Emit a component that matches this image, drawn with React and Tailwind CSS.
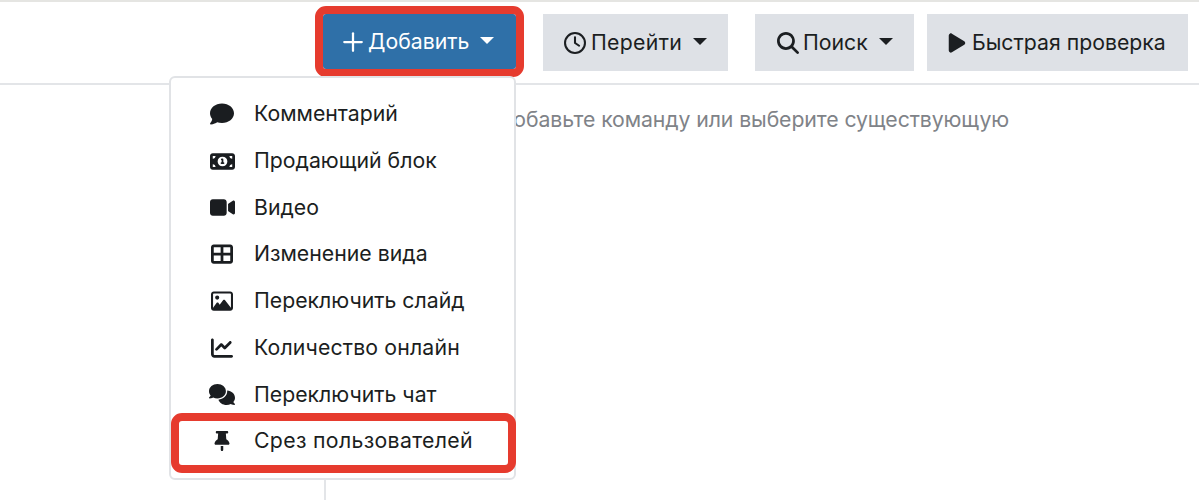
import React from "react";
import { FaComment, FaMoneyBill1, FaVideo, FaTableCellsLarge, FaRegImage, FaChartLine, FaComments, FaThumbtack, FaPlay, FaMagnifyingGlass, FaRegClock } from "react-icons/fa6";
import { Plus } from "lucide-react";

const Caret = ({ color }) => (
  <span className={`ml-[11px] mb-[3px] w-0 h-0 border-x-[7px] border-x-transparent border-t-[7px] ${color}`} />
);

const items = [
  [FaComment, "Комментарий", 24, "tracking-normal"],
  [FaMoneyBill1, "Продающий блок", 25, "tracking-normal"],
  [FaVideo, "Видео", 25, "tracking-normal"],
  [FaTableCellsLarge, "Изменение вида", 22, "tracking-normal"],
  [FaRegImage, "Переключить слайд", 22, "tracking-normal"],
  [FaChartLine, "Количество онлайн", 22, "tracking-[0.15px]"],
  [FaComments, "Переключить чат", 29, "tracking-normal"],
  [FaThumbtack, "Срез пользователей", 20, "tracking-[0.33px]"],
];

export default function App() {
  return (
    <div className="relative h-[500px] w-[1199px] overflow-hidden bg-white text-[21.25px] text-[#1b1e21] [font-family:Inter,'Liberation_Sans',sans-serif]">
      <div className="h-[85px] border-t-2 border-b-2 border-t-[#e5e5e2] border-b-[#e3e5e8] flex items-start pt-[12px] pl-[323px]">
        <div className="rounded-[3px] outline-[8px] outline-[#e63b2e] h-[55px] w-[193px] bg-[#2f70a8] text-white flex items-center pl-[15px]">
          <Plus size={30} strokeWidth={1.8} />
          <span>Добавить</span>
          <Caret color="border-t-white" />
        </div>
        <div className="ml-[27px] h-[57px] w-[185px] bg-[#dee1e6] flex items-center pl-[21px]">
          <FaRegClock size={22} className="mr-[5px]" />
          <span className="tracking-[0.3px]">Перейти</span>
          <Caret color="border-t-[#1b1e21]" />
        </div>
        <div className="ml-[27px] h-[57px] w-[159px] bg-[#dee1e6] flex items-center pl-[22px]">
          <FaMagnifyingGlass size={22} className="mr-[4px]" />
          <span>Поиск</span>
          <Caret color="border-t-[#1b1e21]" />
        </div>
        <div className="ml-[13px] h-[57px] w-[261px] bg-[#dee1e6] flex items-center pl-[19px]">
          <FaPlay size={22} className="mr-[4px]" />
          <span>Быстрая проверка</span>
        </div>
      </div>
      <div className="ml-[324px] h-[415px] border-l-2 border-[#e3e5e8] pl-[170px] pt-[18px] leading-[32px] text-[#7f8388]">
        <span className="tracking-[-0.1px]">Добавьте команду или выберите существующую</span>
      </div>

      <div className="absolute left-[169px] top-[76px] w-[347px] h-[404px] rounded-[6px] border-2 border-[#e1e3e6] bg-white pt-[13px]">
        {items.map(([Icon, label, size, track]) => (
          <div key={label} className="h-[46.7px] flex items-center">
            <span className="w-[83px] pl-[38px] flex justify-start">
              <span className="w-[26px] flex justify-center"><Icon size={size} className="text-[#1a1d20]" /></span>
            </span>
            <span className={track}>{label}</span>
          </div>
        ))}
      </div>
      <div className="absolute left-[171px] top-[413px] w-[345px] h-[60px] rounded-[11px] border-[8px] border-[#e63b2e]" />
    </div>
  );
}
